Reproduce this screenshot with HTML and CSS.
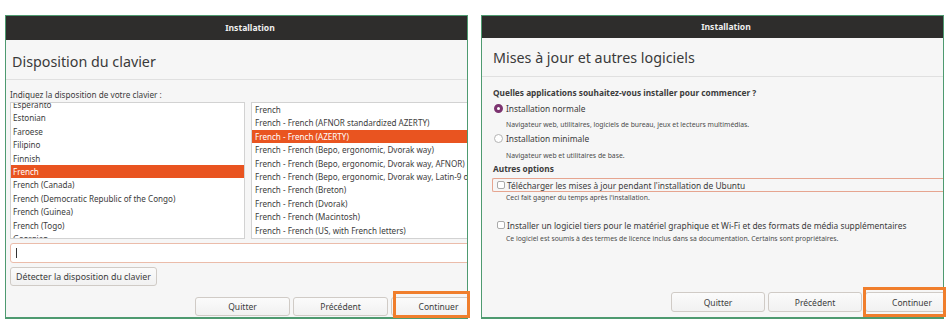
FILE: index.html
```html
<!DOCTYPE html>
<html lang="fr">
<head>
    <meta charset="UTF-8">
    <meta name="viewport" content="width=device-width, initial-scale=1.0">
    <title>Installation</title>
    <link rel="stylesheet" href="styles.css">
</head>
<body>
    <div class="screen">
        <!-- Keyboard layout step -->
        <div class="window">
            <div class="titlebar">Installation</div>
            <div class="page-head head-keyboard">
                <h1>Disposition du clavier</h1>
            </div>
            <div class="page-body body-keyboard">
                <p class="prompt">Indiquez la disposition de votre clavier :</p>
                <div class="lists">
                    <ul class="list list-lang">
                        <li>Esperanto</li>
                        <li>Estonian</li>
                        <li>Faroese</li>
                        <li>Filipino</li>
                        <li>Finnish</li>
                        <li class="selected">French</li>
                        <li>French (Canada)</li>
                        <li>French (Democratic Republic of the Congo)</li>
                        <li>French (Guinea)</li>
                        <li>French (Togo)</li>
                        <li>Georgian</li>
                    </ul>
                    <ul class="list list-variant">
                        <li>French</li>
                        <li>French - French (AFNOR standardized AZERTY)</li>
                        <li class="selected">French - French (AZERTY)</li>
                        <li>French - French (Bepo, ergonomic, Dvorak way)</li>
                        <li>French - French (Bepo, ergonomic, Dvorak way, AFNOR)</li>
                        <li>French - French (Bepo, ergonomic, Dvorak way, Latin-9 only)</li>
                        <li>French - French (Breton)</li>
                        <li>French - French (Dvorak)</li>
                        <li>French - French (Macintosh)</li>
                        <li>French - French (US, with French letters)</li>
                        <li>French - French (alt.)</li>
                    </ul>
                </div>
                <div class="search"><span class="caret"></span></div>
                <button class="btn btn-detect">Détecter la disposition du clavier</button>
                <div class="actions actions-keyboard">
                    <button class="btn">Quitter</button>
                    <button class="btn">Précédent</button>
                    <button class="btn">Continuer</button>
                </div>
            </div>
        </div>

        <!-- Updates and other software step -->
        <div class="window">
            <div class="titlebar titlebar-small">Installation</div>
            <div class="page-head head-updates">
                <h1>Mises à jour et autres logiciels</h1>
            </div>
            <div class="page-body body-updates">
                <p class="question">Quelles applications souhaitez-vous installer pour commencer ?</p>
                <div class="option opt-normal"><span class="radio checked"></span>Installation normale</div>
                <p class="hint hint-normal">Navigateur web, utilitaires, logiciels de bureau, jeux et lecteurs multimédias.</p>
                <div class="option opt-minimal"><span class="radio"></span>Installation minimale</div>
                <p class="hint hint-minimal">Navigateur web et utilitaires de base.</p>
                <p class="question subhead">Autres options</p>
                <div class="option check-row focused"><span class="check"></span>Télécharger les mises à jour pendant l'installation de Ubuntu</div>
                <p class="hint hint-updates">Ceci fait gagner du temps après l'installation.</p>
                <div class="option check-row opt-third"><span class="check"></span>Installer un logiciel tiers pour le matériel graphique et Wi-Fi et des formats de média supplémentaires</div>
                <p class="hint hint-third">Ce logiciel est soumis à des termes de licence inclus dans sa documentation. Certains sont propriétaires.</p>
                <div class="actions actions-updates">
                    <button class="btn">Quitter</button>
                    <button class="btn">Précédent</button>
                    <button class="btn">Continuer</button>
                </div>
            </div>
        </div>

        <!-- highlight boxes drawn over the "Continuer" buttons -->
        <div class="mark mark-keyboard"></div>
        <div class="mark mark-updates"></div>
    </div>
</body>
</html>
```

FILE: styles.css
```css
body {
    margin: 0;
    background: #fff;
    font-family: "Noto Sans", "DejaVu Sans", sans-serif;
    color: #3c3c3c;
    font-size: 8px;
}

.screen {
    position: relative;
    display: flex;
    gap: 13px;
    padding: 15px 0 0 5px;
}

.window {
    width: 463px;
    height: 304px;
    box-sizing: border-box;
    display: flex;
    flex-direction: column;
    background: #f6f6f6;
    border: 1px solid #4e9a70;
    border-bottom-width: 2px;
    overflow: hidden;
}

.titlebar {
    flex: none;
    height: 24px;
    line-height: 24px;
    padding-left: 27px;
    background: #2e2d2c;
    color: #efefef;
    font-weight: bold;
    font-size: 8.6px;
    text-align: center;
}

.titlebar-small {
    height: 22px;
    line-height: 22px;
}

.page-head {
    flex: none;
    display: flex;
    align-items: center;
    border-bottom: 1px solid #e0e0e0;
}

.head-keyboard {
    height: 40px;
    padding: 4px 0 0 6px;
    box-sizing: border-box;
}

.head-updates {
    height: 39px;
    padding: 1px 0 0 11px;
    box-sizing: border-box;
}

h1 {
    margin: 0;
    font-size: 14.3px;
    font-weight: normal;
    color: #3a3a3a;
}

.page-body {
    flex: 1;
    display: flex;
    flex-direction: column;
    min-height: 0;
}

p {
    margin: 0;
}

/* Keyboard step */
.body-keyboard {
    padding: 9px 0 1px 4px;
}

.prompt {
    height: 12px;
    line-height: 12px;
    font-size: 8.2px;
}

.lists {
    display: flex;
    gap: 6px;
    height: 137px;
    margin-top: 1px;
}

.list {
    margin: 0;
    padding: 0;
    list-style: none;
    background: #fff;
    border: 1px solid #d2d2d2;
    overflow: hidden;
    box-sizing: border-box;
    font-size: 8.1px;
}

.list li {
    height: 13.4px;
    line-height: 13.4px;
    padding-left: 2px;
    white-space: nowrap;
}

.list li.selected {
    background: #e95420;
    color: #fff;
}

.list-lang {
    width: 235px;
    flex: none;
}

/* the language list is scrolled a few pixels down */
.list-lang li:first-child {
    margin-top: -5px;
}

.list-variant {
    width: 260px;
    flex: none;
}

.list-variant li {
    padding-left: 3px;
}

.search {
    flex: none;
    width: 480px;
    height: 20px;
    margin-top: 4px;
    box-sizing: border-box;
    display: flex;
    align-items: center;
    background: #fff;
    border: 1px solid #ebbcaa;
    border-radius: 3px;
}

.caret {
    width: 1px;
    height: 10px;
    margin-left: 5px;
    background: #333;
}

.btn {
    flex: none;
    height: 19px;
    padding: 0;
    box-sizing: border-box;
    font-family: inherit;
    font-size: 8.5px;
    color: #3c3c3c;
    background: linear-gradient(#fbfbfb, #f1f1f1);
    border: 1px solid #d0cbc6;
    border-radius: 3px;
}

.btn-detect {
    width: 147px;
    margin-top: 4px;
    font-size: 8.8px;
}

.actions {
    display: flex;
    margin-top: auto;
}

.actions .btn {
    width: 95px;
}

.actions-keyboard {
    gap: 3px;
    padding-left: 185px;
}

/* Updates step */
.body-updates {
    padding: 10px 0 5px 11px;
    font-size: 8.4px;
}

.question {
    height: 12px;
    line-height: 12px;
    font-weight: bold;
    font-size: 8.3px;
}

.option {
    display: flex;
    align-items: center;
    height: 12px;
    white-space: nowrap;
}

.radio {
    width: 9px;
    height: 9px;
    box-sizing: border-box;
    margin: 0 3px 0 1px;
    border: 1px solid #b3b3b3;
    border-radius: 50%;
    background: #fff;
}

.radio.checked {
    border: 3px solid #7c3470;
    background: #fff;
}

.check {
    width: 8px;
    height: 8px;
    box-sizing: border-box;
    margin: 0 2px 0 4px;
    border: 1px solid #aaa;
    border-radius: 2px;
    background: #fff;
}

.check-row {
    height: 14px;
    margin-left: -1px;
    border: 1px solid transparent;
    border-right: none;
    border-radius: 2px 0 0 2px;
    box-sizing: border-box;
}

.check-row.focused {
    border-color: #e6a590;
}

.hint {
    height: 10px;
    line-height: 10px;
    padding-left: 13px;
    font-size: 6.8px;
    color: #4a4a4a;
    white-space: nowrap;
}

.opt-normal { margin-top: 3px; }
.hint-normal { margin-top: 6px; }
.opt-minimal { margin-top: 2px; }
.hint-minimal { margin-top: 7px; }
.subhead { margin-top: 2px; }
.check-row.focused { margin-top: 3px; }
.hint-updates { margin-top: 1px; }
.opt-third { margin-top: 15px; }
.hint-third { margin-top: 2px; }

.actions-updates {
    gap: 3px;
    padding-left: 178px;
}

.actions-updates .btn {
    width: 94px;
    height: 20px;
}

/* orange annotation frames */
.mark {
    position: absolute;
    box-sizing: border-box;
    border: 3px solid #f07e2c;
}

.mark-keyboard {
    left: 393px;
    top: 291px;
    width: 77px;
    height: 27px;
}

.mark-updates {
    left: 863px;
    top: 287px;
    width: 83px;
    height: 30px;
}
```
